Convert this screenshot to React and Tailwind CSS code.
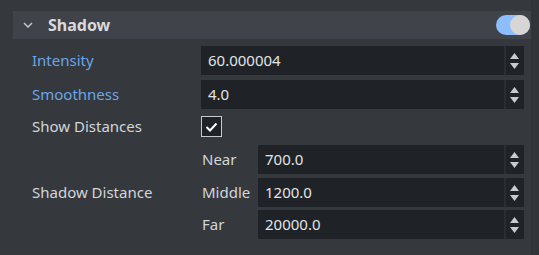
import React from 'react';

const Spinner = () => (
    <div className="flex w-[18px] flex-col items-center justify-center gap-[4px] pr-[2px]">
        <svg width="9" height="6" viewBox="0 0 9 6"><path d="M4.5 0 L9 6 L0 6 Z" fill="#c9cacc" /></svg>
        <svg width="9" height="6" viewBox="0 0 9 6"><path d="M0 0 L9 0 L4.5 6 Z" fill="#c9cacc" /></svg>
    </div>
);

const NumberInput = ({ value }) => (
    <div className="flex h-[29px] flex-1 bg-[#1f2226]">
        <div className="flex flex-1 items-center pl-[7px] text-[15px] text-[#e2e4e6]">{value}</div>
        <div className="w-[2px] bg-[#2a2d31]" />
        <Spinner />
    </div>
);

const Row = ({ label, blue, children, className = '' }) => (
    <div className={`flex items-center pr-[7px] ${className}`}>
        <div className={`w-[201px] shrink-0 pl-[32px] text-[15px] ${blue ? 'text-[#6ba6e6]' : 'text-[#d3d6da]'}`}>{label}</div>
        {children}
    </div>
);

const SubRow = ({ label, value, className = '' }) => (
    <div className={`flex items-center ${className}`}>
        <div className="w-[57px] shrink-0 pl-[1px] text-[15px] text-[#d3d6da]">{label}</div>
        <NumberInput value={value} />
    </div>
);

const App = () => {
    return (
        <div className="flex h-[255px] w-[539px] bg-[#35383d]" style={{ fontFamily: '"Noto Sans", "Open Sans", sans-serif' }}>
            <div className="flex flex-1 flex-col">
                {/* section header */}
                <div className="ml-[13px] mt-[11px] flex h-[28px] items-center bg-[#40434a]">
                    <svg className="ml-[10px]" width="10" height="6" viewBox="0 0 10 6">
                        <path d="M1 1 L5 5 L9 1" stroke="#c4c6c9" strokeWidth="1.5" fill="none" />
                    </svg>
                    <span className="ml-[15px] text-[16px] font-bold text-[#d9dbde]">Shadow</span>
                    <div className="ml-auto mr-[1px] flex h-[20px] w-[34px] items-center justify-end rounded-full bg-[#8cbdff]">
                        <div className="h-[20px] w-[20px] rounded-full bg-[#d8d5d5]" />
                    </div>
                </div>

                <Row label="Intensity" blue className="mt-[7px]">
                    <NumberInput value="60.000004" />
                </Row>
                <Row label="Smoothness" blue className="mt-[5px]">
                    <NumberInput value="4.0" />
                </Row>
                <Row label="Show Distances" className="mt-[7px] h-[21px]">
                    <div className="flex h-[21px] w-[21px] items-center justify-center border border-[#c9cacc] bg-[#1f2226]">
                        <svg width="13" height="10" viewBox="0 0 13 10">
                            <path d="M1.5 5 L5 8.5 L11.5 1.5" stroke="#ffffff" strokeWidth="2" fill="none" />
                        </svg>
                    </div>
                </Row>
                <Row label="Shadow Distance" className="mt-[8px]">
                    <div className="flex flex-1 flex-col">
                        <SubRow label="Near" value="700.0" />
                        <SubRow label="Middle" value="1200.0" className="mt-[4px]" />
                        <SubRow label="Far" value="20000.0" className="mt-[3px]" />
                    </div>
                </Row>
            </div>
            <div className="w-[8px] bg-[#313439]" />
        </div>
    );
};

export default App;
